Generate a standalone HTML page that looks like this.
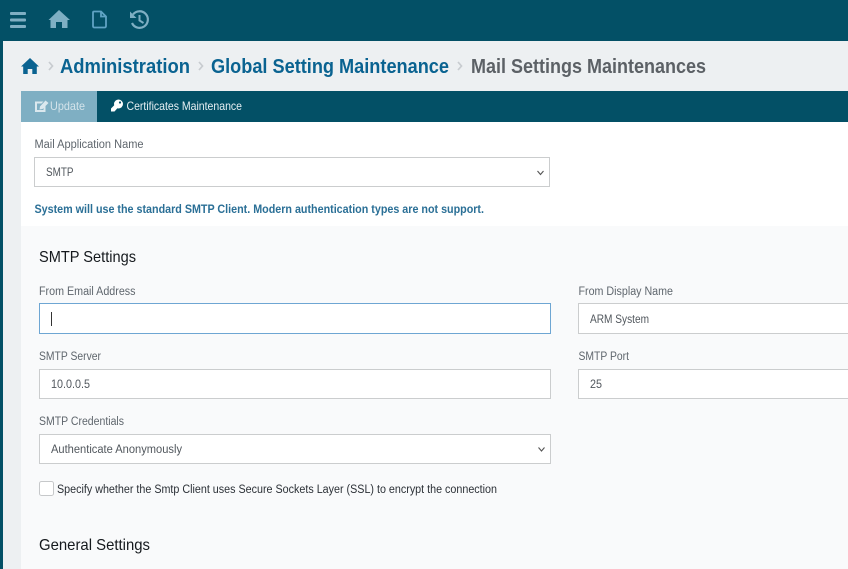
<!DOCTYPE html>
<html><head><meta charset="utf-8">
<style>
html,body{margin:0;padding:0;width:848px;height:569px;overflow:hidden;background:#fff}
svg{display:block;font-family:"Liberation Sans",sans-serif}
</style></head>
<body>
<svg width="848" height="569" viewBox="0 0 848 569" xmlns="http://www.w3.org/2000/svg">
<rect width="848" height="569" fill="#035066"/>
<rect x="3" y="41" width="845" height="528" fill="#edf0f2"/>
<rect x="21" y="91" width="827" height="31" fill="#035066"/>
<rect x="21" y="91" width="76" height="31" fill="#7fafc3"/>
<rect x="21" y="122" width="827" height="447" fill="#fff"/>
<rect x="21" y="226" width="827" height="343" fill="#f9fafb"/>

<!-- top icons -->
<g fill="#7fafc3">
<rect x="10" y="12" width="16" height="3" rx="1"/><rect x="10" y="18.500" width="16" height="3" rx="1"/><rect x="10" y="25" width="16" height="3" rx="1"/>
<path d="M59 10 L70 20 L67.500 20 L67.500 28 L62 28 L62 22 L56 22 L56 28 L50.500 28 L50.500 20 L48.500 20 Z"/>
</g>
<path d="M94 11.500 H101 L106 16.500 V26 Q106 27.500 104.500 27.500 H94.500 Q93 27.500 93 26 V12.500 Q93 11.500 94 11.500 Z M101 11.500 V16.500 H106" fill="none" stroke="#5fa3c4" stroke-width="1.800"/>
<path d="M133 14.500 A8.300 8.300 0 1 1 132 23" fill="none" stroke="#7fafc3" stroke-width="2.200"/>
<path d="M130 11.500 L130 18 L136.500 18 Z" fill="#7fafc3"/>
<path d="M139.500 15 V20.500 L143.500 23" fill="none" stroke="#7fafc3" stroke-width="2"/>

<!-- breadcrumb -->
<path d="M30 58 L39 66.500 L36.800 66.500 L36.800 74 L32.300 74 L32.300 69 L27.700 69 L27.700 74 L23.200 74 L23.200 66.500 L21 66.500 Z" fill="#0a6391"/>
<path d="M49 62 L52.500 66 L49 70" fill="none" stroke="#c8ccd0" stroke-width="1.700"/>
<text x="60" y="73" font-size="20" font-weight="700" fill="#0a6391" textLength="130" lengthAdjust="spacingAndGlyphs">Administration</text>
<path d="M199 62 L202.500 66 L199 70" fill="none" stroke="#c8ccd0" stroke-width="1.700"/>
<text x="211" y="73" font-size="20" font-weight="700" fill="#0a6391" textLength="238" lengthAdjust="spacingAndGlyphs">Global Setting Maintenance</text>
<path d="M458 62 L461.500 66 L458 70" fill="none" stroke="#c8ccd0" stroke-width="1.700"/>
<text x="471" y="73" font-size="20" font-weight="700" fill="#5c6166" textLength="235" lengthAdjust="spacingAndGlyphs">Mail Settings Maintenances</text>

<!-- tabs -->
<path d="M35 101.500 H43.500 L41.500 103.500 H37 V110 H43.500 V107.500 L45.500 105.500 V112 H35 Z" fill="#dbe8ee"/>
<path d="M40 106.500 L45.500 100.500 L48.500 103 L42.500 109 L39.500 109.500 Z" fill="#dbe8ee"/>
<text x="50" y="110" font-size="12" fill="#d3e3ea" textLength="35" lengthAdjust="spacingAndGlyphs">Update</text>
<circle cx="118.500" cy="104" r="4.500" fill="#fff"/>
<path d="M115.500 104 L118.500 107 L114.500 111.500 L111 111.500 L111 108.500 Z" fill="#fff"/>
<circle cx="120" cy="102.500" r="1.100" fill="#035066"/>
<text x="126.500" y="110" font-size="12" fill="#e6eff3" textLength="115.500" lengthAdjust="spacingAndGlyphs">Certificates Maintenance</text>

<!-- mail app -->
<text x="34.500" y="148" font-size="11.500" fill="#5f666d" textLength="109" lengthAdjust="spacingAndGlyphs">Mail Application Name</text>
<rect x="34.500" y="157.500" width="515" height="29" fill="#fff" stroke="#cbcdce"/>
<text x="46" y="176" font-size="11.500" fill="#51575d" textLength="27.500" lengthAdjust="spacingAndGlyphs">SMTP</text>
<path d="M537.500 171 L540.500 174.500 L543.500 171" fill="none" stroke="#555" stroke-width="1.100"/>
<text x="34.500" y="213" font-size="11.500" font-weight="700" fill="#2a6f96" textLength="449.500" lengthAdjust="spacingAndGlyphs">System will use the standard SMTP Client. Modern authentication types are not support.</text>

<!-- SMTP settings -->
<text x="39" y="262" font-size="16" fill="#15191d" textLength="97" lengthAdjust="spacingAndGlyphs">SMTP Settings</text>

<text x="39" y="295" font-size="11.500" fill="#5f666d" textLength="96.500" lengthAdjust="spacingAndGlyphs">From Email Address</text>
<rect x="39.500" y="303.500" width="511" height="30" fill="#fff" stroke="#6ea6d3"/>
<rect x="51" y="312" width="1" height="14" fill="#333"/>

<text x="578.500" y="295" font-size="11.500" fill="#5f666d" textLength="94.500" lengthAdjust="spacingAndGlyphs">From Display Name</text>
<rect x="578.500" y="303.500" width="280" height="30" fill="#fff" stroke="#cbcdce"/>
<text x="590" y="323" font-size="11.500" fill="#51575d" textLength="59" lengthAdjust="spacingAndGlyphs">ARM System</text>

<text x="39" y="360" font-size="11.500" fill="#5f666d" textLength="62" lengthAdjust="spacingAndGlyphs">SMTP Server</text>
<rect x="39.500" y="369.500" width="511" height="29" fill="#fff" stroke="#cbcdce"/>
<text x="51" y="388" font-size="11.500" fill="#51575d" textLength="39" lengthAdjust="spacingAndGlyphs">10.0.0.5</text>

<text x="578.500" y="360" font-size="11.500" fill="#5f666d" textLength="50.500" lengthAdjust="spacingAndGlyphs">SMTP Port</text>
<rect x="578.500" y="369.500" width="280" height="29" fill="#fff" stroke="#cbcdce"/>
<text x="590" y="388" font-size="11.500" fill="#51575d" textLength="12" lengthAdjust="spacingAndGlyphs">25</text>

<text x="39" y="425" font-size="11.500" fill="#5f666d" textLength="85" lengthAdjust="spacingAndGlyphs">SMTP Credentials</text>
<rect x="39.500" y="434.500" width="511" height="29" fill="#fff" stroke="#cbcdce"/>
<text x="51" y="453" font-size="11.500" fill="#51575d" textLength="131" lengthAdjust="spacingAndGlyphs">Authenticate Anonymously</text>
<path d="M538.500 447.500 L541.500 451 L544.500 447.500" fill="none" stroke="#555" stroke-width="1.100"/>

<rect x="39.500" y="481.500" width="14" height="14" rx="2" fill="#fff" stroke="#c6c8ca"/>
<text x="57" y="493" font-size="11.500" fill="#2b3036" textLength="440" lengthAdjust="spacingAndGlyphs">Specify whether the Smtp Client uses Secure Sockets Layer (SSL) to encrypt the connection</text>

<text x="39" y="550" font-size="16" fill="#15191d" textLength="111" lengthAdjust="spacingAndGlyphs">General Settings</text>
</svg>
</body></html>
